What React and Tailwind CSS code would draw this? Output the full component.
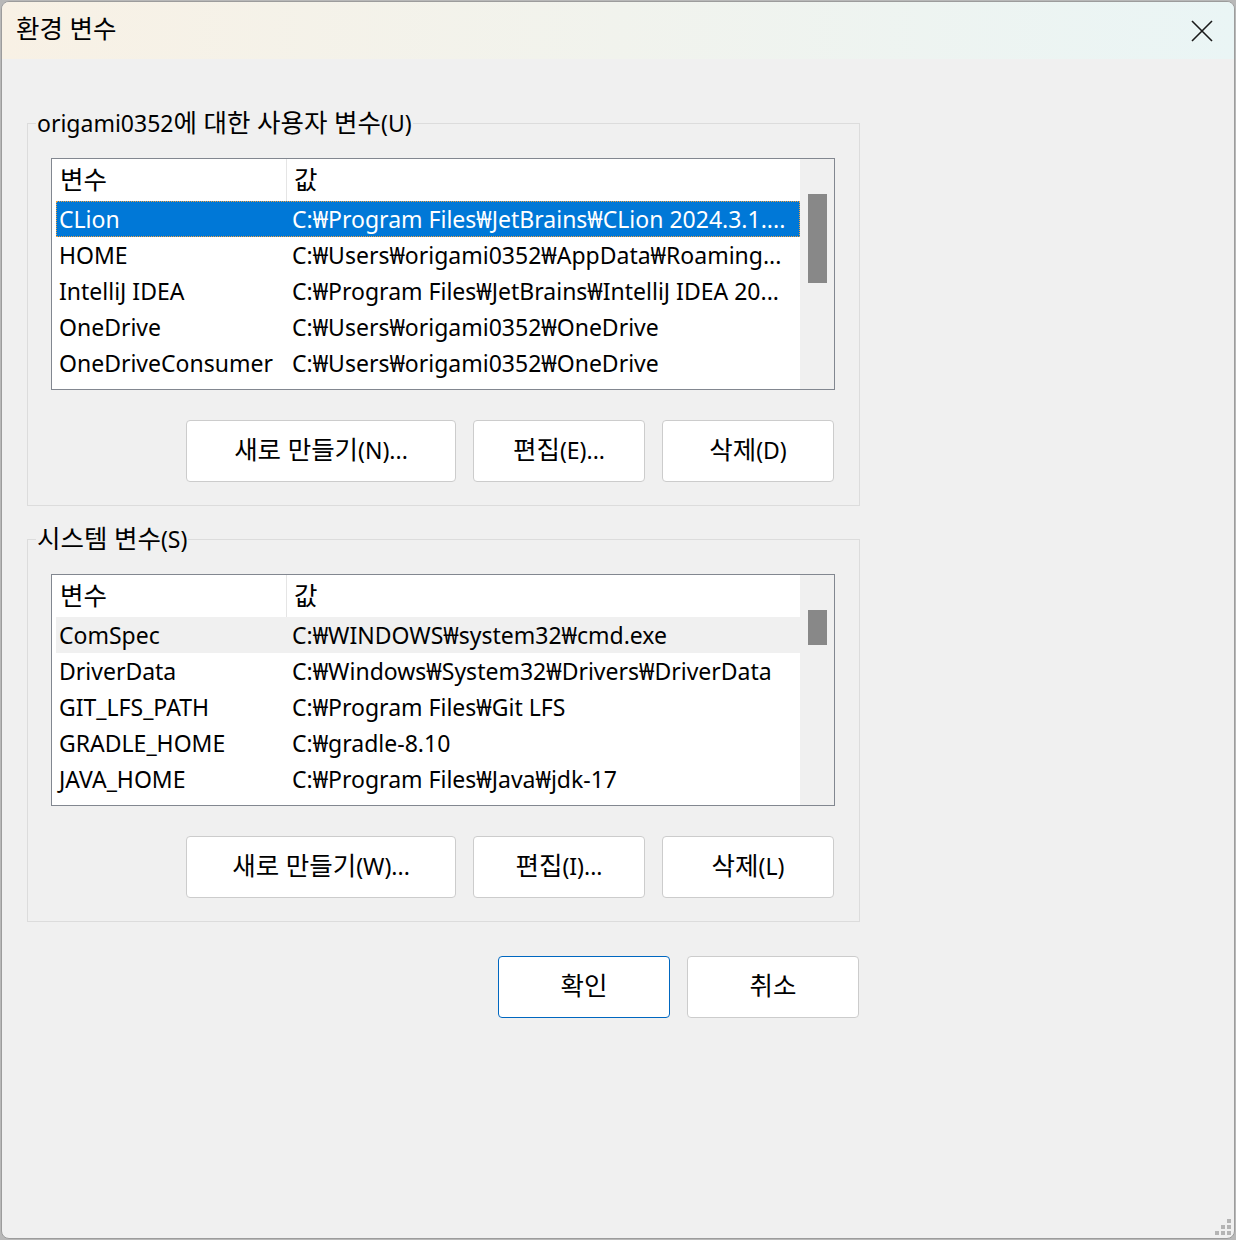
import React from "react";

const FONT = { fontFamily: '"Noto Sans", "Noto Sans CJK KR", sans-serif' };

function T({ children }) {
  const parts = String(children).split(/([\uAC00-\uD7A3]+(?:\s+[\uAC00-\uD7A3]+)*)/);
  return (
    <>
      {parts.map((p, i) =>
        /[\uAC00-\uD7A3]/.test(p) ? (
          <span key={i} className="text-[25.5px] leading-none">{p}</span>
        ) : (
          <span key={i}>{p}</span>
        )
      )}
    </>
  );
}

function ListView({ rows, selectedIndex, selectedStyle, thumbHeight }) {
  return (
    <div className="flex h-[232px] w-[784px] border border-[#828790] bg-white">
      <div className="flex min-w-0 flex-1 flex-col overflow-hidden">
        <div className="flex h-[42px] shrink-0 items-center">
          <div className="flex h-full w-[235px] items-center border-r border-[#e5e5e5] pl-[8px] text-[23px] leading-[30px]"><T>변수</T></div>
          <div className="pl-[7px] text-[23px] leading-[30px]"><T>값</T></div>
        </div>
        {rows.map((r, i) => {
          const sel = i === selectedIndex;
          let cls = "text-black";
          if (sel && selectedStyle === "blue")
            cls = "bg-[#0078d7] text-white outline outline-1 outline-dotted outline-[#f0a040] -outline-offset-1";
          if (sel && selectedStyle === "gray") cls = "bg-[#f0f0f0] text-black";
          return (
            <div key={i} className={`ml-[4px] flex h-[36px] shrink-0 items-center whitespace-nowrap text-[23px] leading-[30px] ${cls}`}>
              <div className="w-[233px] shrink-0 pl-[3px]">{r[0]}</div>
              <div className="min-w-0 flex-1 overflow-hidden pl-[3px]">{r[1]}</div>
            </div>
          );
        })}
      </div>
      <div className="flex w-[34px] shrink-0 flex-col items-center bg-[#f0f0f0] pt-[35px]">
        <div className="w-[19px] bg-[#888888]" style={{ height: thumbHeight }} />
      </div>
    </div>
  );
}

function Btn({ children, w, primary }) {
  return (
    <button
      className={`flex h-[62px] items-center justify-center rounded-[4px] border bg-white text-[23px] leading-[30px] text-black ${
        primary ? "border-[#0067c0]" : "border-[#cccccc]"
      } ${w}`}
    >
      <span className="-mt-[2px]"><T>{children}</T></span>
    </button>
  );
}

function Group({ label, children }) {
  return (
    <fieldset className="w-[833px] border border-[#dcdcdc] pb-[23px] pl-[8px] pr-[24px]">
      <legend className="h-[30px] px-[1px] text-[23px] leading-[30px]"><T>{label}</T></legend>
      <div className="ml-[15px] mt-[20px] flex flex-col">{children}</div>
    </fieldset>
  );
}

export default function App() {
  const userRows = [
    ["CLion", "C:₩Program Files₩JetBrains₩CLion 2024.3.1...."],
    ["HOME", "C:₩Users₩origami0352₩AppData₩Roaming..."],
    ["IntelliJ IDEA", "C:₩Program Files₩JetBrains₩IntelliJ IDEA 20..."],
    ["OneDrive", "C:₩Users₩origami0352₩OneDrive"],
    ["OneDriveConsumer", "C:₩Users₩origami0352₩OneDrive"],
  ];
  const sysRows = [
    ["ComSpec", "C:₩WINDOWS₩system32₩cmd.exe"],
    ["DriverData", "C:₩Windows₩System32₩Drivers₩DriverData"],
    ["GIT_LFS_PATH", "C:₩Program Files₩Git LFS"],
    ["GRADLE_HOME", "C:₩gradle-8.10"],
    ["JAVA_HOME", "C:₩Program Files₩Java₩jdk-17"],
  ];
  return (
    <div className="h-[1240px] w-[1236px] bg-[#b8b8b8] pl-[1px] pt-[1px]" style={FONT}>
      <div className="relative flex h-[1238px] w-[1234px] flex-col overflow-hidden rounded-[8px] border border-[#9c9c9c] bg-[#f0f0f0] text-black">
        <div className="flex h-[57px] shrink-0 items-center justify-between bg-gradient-to-r from-[#f8f1e5] to-[#eaf5f5] pl-[14px] pr-[21px]">
          <span className="-mt-[3px] text-[23px] leading-[30px]"><T>환경 변수</T></span>
          <svg width="22" height="22" viewBox="0 0 22 22">
            <path d="M1 1 L21 21 M21 1 L1 21" stroke="#1a1a1a" strokeWidth="1.6" />
          </svg>
        </div>
        <div className="ml-[25px] mt-[49px] flex flex-col">
          <Group label="origami0352에 대한 사용자 변수(U)">
            <ListView rows={userRows} selectedIndex={0} selectedStyle="blue" thumbHeight={89} />
            <div className="mt-[30px] flex justify-end gap-[17px] pr-[1px]">
              <Btn w="w-[270px]">새로 만들기(N)...</Btn>
              <Btn w="w-[172px]">편집(E)...</Btn>
              <Btn w="w-[172px]">삭제(D)</Btn>
            </div>
          </Group>
          <div className="mt-[18px]">
            <Group label="시스템 변수(S)">
              <ListView rows={sysRows} selectedIndex={0} selectedStyle="gray" thumbHeight={35} />
              <div className="mt-[30px] flex justify-end gap-[17px] pr-[1px]">
                <Btn w="w-[270px]">새로 만들기(W)...</Btn>
                <Btn w="w-[172px]">편집(I)...</Btn>
                <Btn w="w-[172px]">삭제(L)</Btn>
              </div>
            </Group>
          </div>
          <div className="mt-[34px] flex w-[833px] justify-end gap-[17px] pr-[1px]">
            <Btn w="w-[172px]" primary>확인</Btn>
            <Btn w="w-[172px]">취소</Btn>
          </div>
        </div>
        <svg className="absolute bottom-[3px] right-[3px]" width="16" height="16" viewBox="0 0 16 16">
          <g fill="#b4b4b4">
            <rect x="12" y="0" width="4" height="4" />
            <rect x="6" y="6" width="4" height="4" />
            <rect x="12" y="6" width="4" height="4" />
            <rect x="0" y="12" width="4" height="4" />
            <rect x="6" y="12" width="4" height="4" />
            <rect x="12" y="12" width="4" height="4" />
          </g>
        </svg>
      </div>
    </div>
  );
}
